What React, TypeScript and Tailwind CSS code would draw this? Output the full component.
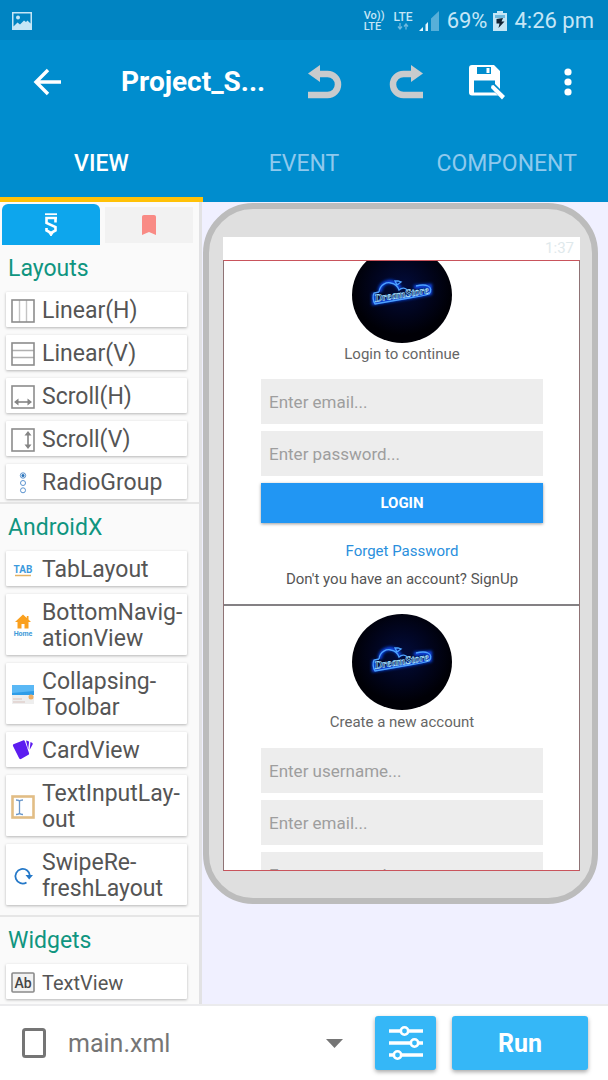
import { useState } from 'react';
import type { ReactNode } from 'react';

type Item = { label: string; icon: ReactNode; small?: boolean };

const LinearHIcon = () => (
  <svg width="24" height="24" viewBox="0 0 24 24" fill="none">
    <path d="M8.5 1v22M15.5 1v22" stroke="#c4c4c4" strokeWidth="1.4" />
    <rect x="1" y="1" width="22" height="22" stroke="#8c8c8c" strokeWidth="1.6" />
  </svg>
);

const LinearVIcon = () => (
  <svg width="24" height="24" viewBox="0 0 24 24" fill="none">
    <path d="M1 8.5h22M1 15.5h22" stroke="#b0b0b0" strokeWidth="1.6" />
    <rect x="1" y="1" width="22" height="22" stroke="#8c8c8c" strokeWidth="1.6" />
  </svg>
);

const ScrollHIcon = () => (
  <svg width="24" height="24" viewBox="0 0 24 24" fill="none">
    <rect x="1" y="1" width="22" height="22" stroke="#8c8c8c" strokeWidth="1.6" />
    <path d="M5 17h14" stroke="#858585" strokeWidth="1.6" />
    <path d="M7.5 13.5v7L3 17zM16.5 13.5v7L21 17z" fill="#858585" />
  </svg>
);

const ScrollVIcon = () => (
  <svg width="24" height="24" viewBox="0 0 24 24" fill="none">
    <rect x="1" y="1" width="22" height="22" stroke="#8c8c8c" strokeWidth="1.6" />
    <path d="M17 5v14" stroke="#858585" strokeWidth="1.6" />
    <path d="M13.5 7.5h7L17 3zM13.5 16.5h7L17 21z" fill="#858585" />
  </svg>
);

const RadioIcon = () => (
  <svg width="24" height="24" viewBox="0 0 24 24" fill="none" stroke="#5b93cf">
    <circle cx="12" cy="4.5" r="2.7" />
    <circle cx="12" cy="4.5" r="1.5" fill="#2470b8" stroke="none" />
    <circle cx="12" cy="12" r="2.5" />
    <circle cx="12" cy="19.3" r="2.5" />
  </svg>
);

const TabIcon = () => (
  <svg width="24" height="24" viewBox="0 0 24 24">
    <text x="12" y="15" textAnchor="middle" fontFamily="Roboto, sans-serif" fontSize="10" fontWeight="700" fill="#3d9add">TAB</text>
    <path d="M4 17.5h16" stroke="#e3b264" strokeWidth="1.5" />
  </svg>
);

const HomeIcon = () => (
  <svg width="24" height="24" viewBox="0 0 24 24">
    <path d="M12 .5L4 8h2.500v6.500h4V10h3v4.500h4V8H20l-2.500-2.400V2h-1.700v2z" fill="#faa01e" />
    <text x="12" y="22" textAnchor="middle" fontFamily="Roboto, sans-serif" fontSize="7" fontWeight="700" fill="#3f9bd9">Home</text>
  </svg>
);

const CollapsingIcon = () => (
  <svg width="24" height="24" viewBox="0 0 24 24">
    <path d="M1 11h22v10H1z" fill="#eeeeee" />
    <path d="M1 2h22v10H1z" fill="#2f9de8" />
    <path d="M1 2h22v6L1 10z" fill="#5ab8f5" />
    <path d="M2 16h9M2 19h12" stroke="#d9c2bd" />
    <circle cx="20" cy="14" r="2.5" fill="#eeb068" />
  </svg>
);

const CardIcon = () => (
  <svg width="24" height="24" viewBox="0 0 24 24" fill="#5d1df0">
    <path d="M3 5l9-3.500c1-.4 1.600 0 2 1l4 11.500c.3 1-.1 1.600-1 2L10 20c-1 .4-1.700 0-2-1L2 7c-.3-1 .1-1.700 1-2z" />
    <path d="M15 1.500l2 .5c.8.3 1.100.7 1 1.500l-.8 7zM19.500 3l1.500.8c.8.500 1 1 .6 1.800l-3 5.500z" />
  </svg>
);

const InputIcon = () => (
  <svg width="24" height="24" viewBox="0 0 24 24" fill="none">
    <rect x="1.5" y="1.5" width="21" height="21" stroke="#e2bd85" strokeWidth="2.6" />
    <path d="M8.500 6v12M5 5c2 0 3.500.3 3.500 1.500C8.500 5.300 10 5 12 5M5 19.500c2 0 3.500-.5 3.500-1.700 0 1.200 1.500 1.700 3.500 1.700" stroke="#6b98cb" strokeWidth="1.3" />
  </svg>
);

const RefreshIcon = () => (
  <svg width="24" height="24" viewBox="0 0 24 24" fill="none">
    <path d="M15.5 18.500A7.300 7.300 0 1 1 19 12" stroke="#2478c8" strokeWidth="1.8" />
    <path d="M14.500 11h7.500L18.200 15.500z" fill="#2478c8" />
  </svg>
);

const TextIcon = () => (
  <svg width="24" height="24" viewBox="0 0 24 24" fill="none">
    <rect x="1" y="2" width="22" height="19" rx="1" fill="#f2f2f2" stroke="#8a8a8a" strokeWidth="1.6" />
    <text x="12" y="16.5" textAnchor="middle" fontFamily="Roboto, sans-serif" fontSize="14" fontWeight="500" fill="#444">Ab</text>
  </svg>
);

const groups: { title: string; items: Item[] }[] = [
  {
    title: 'Layouts',
    items: [
      { label: 'Linear(H)', icon: <LinearHIcon /> },
      { label: 'Linear(V)', icon: <LinearVIcon /> },
      { label: 'Scroll(H)', icon: <ScrollHIcon /> },
      { label: 'Scroll(V)', icon: <ScrollVIcon /> },
      { label: 'RadioGroup', icon: <RadioIcon /> },
    ],
  },
  {
    title: 'AndroidX',
    items: [
      { label: 'TabLayout', icon: <TabIcon /> },
      { label: 'BottomNavig-\nationView', icon: <HomeIcon /> },
      { label: 'Collapsing-\nToolbar', icon: <CollapsingIcon /> },
      { label: 'CardView', icon: <CardIcon /> },
      { label: 'TextInputLay-\nout', icon: <InputIcon /> },
      { label: 'SwipeRe-\nfreshLayout', icon: <RefreshIcon /> },
    ],
  },
  {
    title: 'Widgets',
    items: [{ label: 'TextView', icon: <TextIcon />, small: true }],
  },
];

const tabs = ['VIEW', 'EVENT', 'COMPONENT'];

function StatusBar() {
  return (
    <div className="flex h-10 shrink-0 items-center bg-[#0084c2] pt-px pr-[14px] pl-3 text-[#c5e6f6]">
      <svg width="20" height="18" viewBox="0 0 20 18">
        <path fillRule="evenodd" d="M0 0h20v18H0zM1.500 1.500v13l4-4 2.500 2 4-4 2 1.500 1.500-1.500 3 3v-10z" fill="#c5e6f6" />
        <circle cx="6" cy="5.5" r="2" fill="#c5e6f6" />
      </svg>
      <div className="ml-auto flex items-center">
        <div className="text-[11px] leading-[11px] font-medium">
          <div>Vo))</div>
          <div>LTE</div>
        </div>
        <div className="ml-[9px] flex flex-col items-center text-[12px] leading-[12px] font-medium">
          LTE
          <svg width="12" height="7" viewBox="0 0 12 7" fill="none" stroke="#6fb9de" strokeWidth="1.3">
            <path d="M3 0v5.500M1 3.500l2 2.500 2-2.500M9 6.500V1M7 3.500L9 1l2 2.500" />
          </svg>
        </div>
        <svg className="ml-[6px]" width="20" height="20" viewBox="0 0 20 20">
          <path d="M0 20l4-4v4zM6.500 13.500L9 11v9H6.500z" fill="#e4f4fc" />
          <path d="M12 7.500L20 0v20h-8z" fill="#57afd9" />
        </svg>
        <span className="ml-2 text-[22px] leading-7">69%</span>
        <svg className="ml-[6px]" width="14" height="20" viewBox="0 0 14 20">
          <path d="M4 0h6v2h4v18H0V2h4z" fill="#c5e6f6" />
          <path d="M2 4h10v3H2z" fill="#6fb9de" />
          <path d="M3.500 8l6.500-1-1.500 3.500h3L5.500 17l1-4.500H3.500z" fill="#123" />
        </svg>
        <span className="ml-[7px] text-[22px] leading-7">4:26 pm</span>
      </div>
    </div>
  );
}

function Toolbar() {
  return (
    <header className="flex h-[84px] shrink-0 items-center">
      <button aria-label="Back" className="ml-[33px] flex w-7 justify-center">
        <svg width="28" height="28" viewBox="0 0 28 28" fill="none" stroke="#fff" strokeWidth="3.4">
          <path d="M28 14H3M15 2L3 14l12 12" />
        </svg>
      </button>
      <h1 className="ml-[60px] min-w-0 flex-1 text-[28px] font-bold whitespace-nowrap text-white">Project_S...</h1>
      <button aria-label="Undo" className="flex w-[81px] justify-center">
        <svg width="34" height="34" viewBox="0 0 34 34">
          <path d="M0 30h19.500a10.500 10.500 0 0 0 0-21H9" fill="none" stroke="#c8cbcd" strokeWidth="6.5" />
          <path d="M12 0v17L0 8.500z" fill="#c8cbcd" />
        </svg>
      </button>
      <button aria-label="Redo" className="flex w-[81px] justify-center">
        <svg width="34" height="34" viewBox="0 0 34 34">
          <path d="M34 30H14.500a10.500 10.500 0 0 1 0-21H25" fill="none" stroke="#c8cbcd" strokeWidth="6.5" />
          <path d="M22 0v17l12-8.500z" fill="#c8cbcd" />
        </svg>
      </button>
      <button aria-label="Save" className="flex w-[81px] justify-center">
        <svg width="36" height="36" viewBox="0 0 36 36">
          <path fillRule="evenodd" d="M3 1h22l6 6v23c0 1-.8 1.500-2 1.500H3c-2 0-3-1-3-3V4c0-2 1-3 3-3zM8 3v7h14V3zM5 16.500v12h21v-12z" fill="#fff" />
          <path d="M17.500 4h3v5h-3z" fill="#fff" />
          <path d="M21 18l5 2 11 11-4 5-11-12z" fill="#008dce" />
          <path d="M22.500 21.500l2-.5L36 32l-3 3.500L22 24z" fill="#fff" />
        </svg>
      </button>
      <button aria-label="More" className="flex w-[81px] justify-center">
        <svg width="8" height="28" viewBox="0 0 8 28" fill="#fff">
          <circle cx="4" cy="4" r="3.6" />
          <circle cx="4" cy="14" r="3.6" />
          <circle cx="4" cy="24" r="3.6" />
        </svg>
      </button>
    </header>
  );
}

function Palette() {
  return (
    <aside className="w-[202px] shrink-0 overflow-hidden border-r-3 border-[#e2e2e4] bg-[#fafafa]">
      <div className="flex items-center gap-[5px] pt-[2px] pr-[6px] pl-[2px]">
        <button aria-label="Components" className="flex h-[41px] w-[98px] items-center justify-center rounded-t-md bg-[#0da6ed]">
          <svg width="14" height="24" viewBox="0 0 14 24" fill="none" stroke="#fff">
            <path d="M1 1.200h12" strokeWidth="1.8" />
            <path d="M13 5H2.500v5l9 4v3.500L7 20l-4.500-2.500V15M11.500 5v4.500" strokeWidth="2.6" />
            <path d="M5 20l2 3 2-3z" fill="#fff" />
          </svg>
        </button>
        <button aria-label="Bookmarks" className="flex h-9 flex-1 items-center justify-center bg-[#f2f2f2]">
          <svg width="14" height="20" viewBox="0 0 14 20">
            <path d="M2 0h10c1.200 0 2 .8 2 2v18l-7-3-7 3V2C0 .8.800 0 2 0z" fill="#f98b85" />
          </svg>
        </button>
      </div>
      {groups.map((group, i) => (
        <section
          key={group.title}
          className={i === 0 ? '' : i === 1 ? 'mt-[3px] border-t-2 border-[#e6e6e6]' : 'mt-[10px] border-t-2 border-[#e6e6e6]'}
        >
          <h2 className="flex h-[47px] items-center pt-px pl-2 text-[23px] text-[#0f9580]">{group.title}</h2>
          <div className="flex flex-col gap-2 pr-3 pl-[6px]">
            {group.items.map((item) => (
              <button
                key={item.label}
                className={`flex min-h-[35px] items-center gap-[7px] rounded-[1px] bg-white pt-[6px] pb-[3px] pl-[5px] text-left leading-[26px] whitespace-pre text-[#555] shadow-[0_1px_3px_rgba(0,0,0,0.28)] ${
                  item.small ? 'text-[20px]' : 'text-[23px]'
                }`}
              >
                {item.icon}
                {item.label}
              </button>
            ))}
          </div>
        </section>
      ))}
    </aside>
  );
}

function NeonLogo() {
  return (
    <svg className="h-24 w-[100px] shrink-0" viewBox="0 0 100 96" role="img" aria-label="DreamStore">
      <defs>
        <radialGradient id="night" cx="50%" cy="42%" r="50%">
          <stop offset="0" stopColor="#020c3c" />
          <stop offset="0.6" stopColor="#01041c" />
          <stop offset="1" stopColor="#000006" />
        </radialGradient>
        <filter id="glow" x="-30%" y="-60%" width="160%" height="220%">
          <feGaussianBlur stdDeviation="1.6" />
        </filter>
      </defs>
      <ellipse cx="50" cy="48" rx="50" ry="48" fill="url(#night)" />
      <path d="M22 46v10l35-6 21-4v-7l-16 1M28 45c0-12 16-14 20-3" fill="none" stroke="#0a48f0" strokeWidth="4" filter="url(#glow)" />
      <g fill="none" stroke="#4da2ff" strokeWidth="1.3">
        <path d="M27 45l-5 1c-1.500 3-1 8 1 11l34-6c7-1 14-2 20-4 3-3 2-7-1-8-4-2-8-1-12 0" />
        <path d="M27 45c1-8 8-10 12-9 5 1 7 4 8 7 3-3 7-2 8 0M43 34l2 4 4-3-3-1z" />
      </g>
      <text x="23" y="55" transform="rotate(-9 23 55)" fontFamily="Liberation Serif, serif" fontSize="11" fontStyle="italic" fontWeight="700" fill="#061c5c" stroke="#a6e0ff" strokeWidth="0.6">DreamStore</text>
    </svg>
  );
}

function Field({ label, type = 'text' }: { label: string; type?: string }) {
  return (
    <input
      type={type}
      aria-label={label}
      placeholder={label}
      className="h-[45px] w-full shrink-0 bg-[#ededed] px-2 text-[17px] text-[#555] outline-none placeholder:text-[#9e9e9e]"
    />
  );
}

function Preview() {
  return (
    <main className="min-w-0 flex-1 bg-[#f0f0ff] pt-px pr-[10px] pl-px">
      <div className="rounded-[50px] border-6 border-[#bcbcbc] bg-[#dfdfdf] pt-7 pr-3 pb-[27px] pl-[14px]">
        <div className="flex h-[23px] items-center justify-end bg-white pr-[6px] text-[15px] text-[#dfe9ec]">1:37</div>
        <div className="flex h-[611px] flex-col overflow-hidden border border-x-[#8f7375] border-y-[#c9545c] bg-white">
          <section className="-mt-[14px] flex shrink-0 flex-col items-center pr-9 pl-[37px]">
            <NeonLogo />
            <p className="text-[15px] leading-[22px] text-[#666]">Login to continue</p>
            <form className="mt-[14px] flex w-full flex-col gap-[7px]" onSubmit={(e) => e.preventDefault()}>
              <Field label="Enter email..." type="email" />
              <Field label="Enter password..." type="password" />
              <button className="h-10 bg-[#2196f3] text-[15px] font-bold text-white shadow-[0_1px_3px_rgba(0,0,0,0.4)]">LOGIN</button>
            </form>
            <a href="#forgot" className="mt-[14px] text-[15px] leading-7 text-[#2a8fdd]">Forget Password</a>
            <a href="#signup" className="text-[15px] leading-7 text-[#555]">Don't you have an account? SignUp</a>
          </section>
          <section className="mt-[11px] flex shrink-0 flex-col items-center border-t-2 border-[#848184] pt-2 pr-9 pl-[37px]">
            <NeonLogo />
            <p className="text-[15px] leading-6 text-[#666]">Create a new account</p>
            <form className="mt-[14px] flex w-full flex-col gap-[7px]" onSubmit={(e) => e.preventDefault()}>
              <Field label="Enter username..." />
              <Field label="Enter email..." type="email" />
              <Field label="Enter password..." type="password" />
            </form>
          </section>
        </div>
      </div>
    </main>
  );
}

function BottomBar() {
  return (
    <footer className="flex h-19 shrink-0 items-center border-t-2 border-[#ebebed] bg-white pr-5 pl-[22px]">
      <svg width="24" height="30" viewBox="0 0 24 30" fill="none">
        <rect x="1.5" y="1.5" width="21" height="27" rx="2" stroke="#757575" strokeWidth="3" />
      </svg>
      <div className="ml-[22px] flex flex-1 items-center">
        <select aria-label="File" className="h-12 min-w-0 flex-1 appearance-none pt-[2px] text-[25px] leading-10 text-[#757575] outline-none">
          <option>main.xml</option>
        </select>
        <svg width="17" height="9" viewBox="0 0 17 9">
          <path d="M0 0h17L8.500 9z" fill="#757575" />
        </svg>
      </div>
      <button aria-label="Settings" className="ml-8 flex h-[54px] w-[61px] items-center justify-center rounded-[3px] bg-[#35b7f7] shadow-[0_2px_4px_rgba(0,0,0,0.35)]">
        <svg width="34" height="36" viewBox="0 0 34 36" fill="#35b7f7" stroke="#fff" strokeWidth="3.5">
          <path d="M0 6h34M0 18h34M0 30h34" />
          <circle cx="15.5" cy="6" r="3.7" strokeWidth="2.6" />
          <circle cx="25.5" cy="18" r="3.7" strokeWidth="2.6" />
          <circle cx="8.5" cy="30" r="3.7" strokeWidth="2.6" />
        </svg>
      </button>
      <button className="ml-4 h-[54px] w-[136px] rounded-[3px] bg-[#35b7f7] pt-[2px] text-[25px] font-bold text-white shadow-[0_2px_4px_rgba(0,0,0,0.35)]">Run</button>
    </footer>
  );
}

export default function App() {
  const [active, setActive] = useState('VIEW');

  return (
    <div className="flex h-screen flex-col overflow-hidden bg-[#008dce] font-[Roboto,sans-serif]">
      <StatusBar />
      <Toolbar />
      <nav className="flex h-[78px] shrink-0">
        {tabs.map((tab) => (
          <button
            key={tab}
            onClick={() => setActive(tab)}
            className={`flex-1 basis-0 border-b-5 pt-2 text-[23px] ${
              tab === active ? 'border-[#ffc107] font-medium text-white' : 'border-transparent text-[#8fc9ed]'
            }`}
          >
            {tab}
          </button>
        ))}
      </nav>
      <div className="flex min-h-0 flex-1">
        <Palette />
        <Preview />
      </div>
      <BottomBar />
    </div>
  );
}
